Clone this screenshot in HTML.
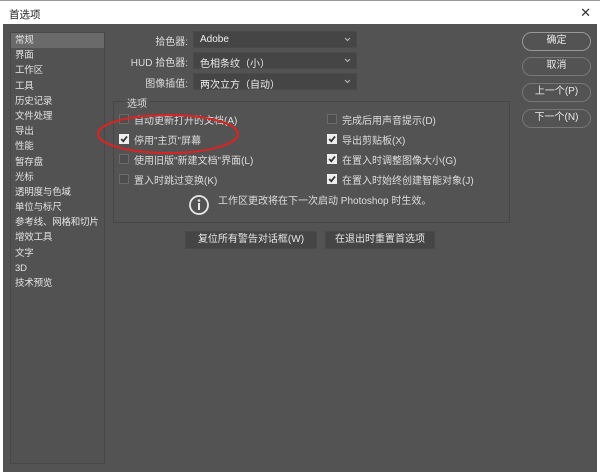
<!DOCTYPE html>
<html><head><meta charset="utf-8">
<style>
*{margin:0;padding:0;box-sizing:border-box}
body{width:600px;height:475px;background:#fff;position:relative;overflow:hidden;font-family:"Liberation Sans","Noto Sans CJK SC",sans-serif;font-size:10px;color:#ddd}
.title{position:absolute;left:0;top:0;width:600px;height:24px;background:#fff;border-top:1px solid #999;color:#222;font-size:10.5px;padding:6px 0 0 9px}
.x{position:absolute;right:9px;top:4px;font-size:13px;color:#333}
.win{position:absolute;left:3px;top:24px;width:594px;height:448px;background:#535353}
.side{position:absolute;left:10px;top:32px;width:95px;height:432px;border:1px solid #484848;background:#525252}
.side div{height:15.2px;line-height:15px;padding-left:4px;font-size:9.5px;color:#e4e4e4;white-space:nowrap;letter-spacing:-0.2px}
.side .sel{background:#6a6a6a}
.a{position:absolute;white-space:nowrap}
.lbl{position:absolute;width:90px;text-align:right;left:98px}
.dd{position:absolute;left:193px;width:164px;height:17px;background:#454545;border:1px solid #4a4a4a;padding:2px 0 0 6px;color:#eee}
.dd svg{position:absolute;right:5px;top:5px}
.grp{position:absolute;left:113px;top:101px;width:397px;height:122px;border:1px solid #464646}
.cb{position:absolute;width:10px;height:10px;border:1px solid #6a6a6a;background:#4d4d4d}
.cb.on{background:#eee;border-color:#eee}
.btn{position:absolute;height:18px;background:#454545;border:1px solid #4a4a4a;text-align:center;line-height:16px;color:#e8e8e8}
.pill{position:absolute;left:522px;width:69px;height:19px;border:1.5px solid #777;border-radius:10px;text-align:center;line-height:16px;color:#e8e8e8}
</style></head><body>
<div class="title">首选项<span class="x">✕</span></div>
<div class="win"></div>
<div class="side">
<div class="sel">常规</div><div>界面</div><div>工作区</div><div>工具</div><div>历史记录</div><div>文件处理</div><div>导出</div><div>性能</div><div>暂存盘</div><div>光标</div><div>透明度与色域</div><div>单位与标尺</div><div>参考线、网格和切片</div><div>增效工具</div><div>文字</div><div>3D</div><div>技术预览</div>
</div>
<div class="lbl" style="top:33px">拾色器:</div>
<div class="lbl" style="top:54px">HUD 拾色器:</div>
<div class="lbl" style="top:75px">图像插值:</div>
<div class="dd" style="top:31px">Adobe<svg width="7" height="5"><path d="M1 1L3.5 3.5L6 1" fill="none" stroke="#bbb"/></svg></div>
<div class="dd" style="top:52px">色相条纹（小）<svg width="7" height="5"><path d="M1 1L3.5 3.5L6 1" fill="none" stroke="#bbb"/></svg></div>
<div class="dd" style="top:73px">两次立方（自动）<svg width="7" height="5"><path d="M1 1L3.5 3.5L6 1" fill="none" stroke="#bbb"/></svg></div>
<div class="grp"></div>
<div class="a" style="left:124px;top:95px;background:#535353;padding:0 3px">选项</div>
<div class="cb" style="left:119px;top:114px"></div><div class="a" style="left:134px;top:112px">自动更新打开的文档(A)</div>
<div class="cb on" style="left:119px;top:134px"><svg width="8" height="8" style="position:absolute;left:0;top:0"><path d="M1.2 4L3.3 6.2L7 1.5" fill="none" stroke="#333" stroke-width="1.8"/></svg></div><div class="a" style="left:134px;top:132px">停用"主页"屏幕</div>
<div class="cb" style="left:119px;top:154px"></div><div class="a" style="left:134px;top:152px">使用旧版"新建文档"界面(L)</div>
<div class="cb" style="left:119px;top:174px"></div><div class="a" style="left:134px;top:172px">置入时跳过变换(K)</div>
<div class="cb" style="left:327px;top:114px"></div><div class="a" style="left:342px;top:112px">完成后用声音提示(D)</div>
<div class="cb on" style="left:327px;top:134px"><svg width="8" height="8" style="position:absolute;left:0;top:0"><path d="M1.2 4L3.3 6.2L7 1.5" fill="none" stroke="#333" stroke-width="1.8"/></svg></div><div class="a" style="left:342px;top:132px">导出剪贴板(X)</div>
<div class="cb on" style="left:327px;top:154px"><svg width="8" height="8" style="position:absolute;left:0;top:0"><path d="M1.2 4L3.3 6.2L7 1.5" fill="none" stroke="#333" stroke-width="1.8"/></svg></div><div class="a" style="left:342px;top:152px">在置入时调整图像大小(G)</div>
<div class="cb on" style="left:327px;top:174px"><svg width="8" height="8" style="position:absolute;left:0;top:0"><path d="M1.2 4L3.3 6.2L7 1.5" fill="none" stroke="#333" stroke-width="1.8"/></svg></div><div class="a" style="left:342px;top:172px">在置入时始终创建智能对象(J)</div>
<svg class="a" style="left:188px;top:194px" width="22" height="22"><circle cx="11" cy="11" r="9" fill="none" stroke="#e8e8e8" stroke-width="1.8"/><circle cx="11" cy="6.5" r="1.3" fill="#e8e8e8"/><rect x="10" y="9" width="2" height="7" fill="#e8e8e8"/></svg>
<div class="a" style="left:218px;top:192px">工作区更改将在下一次启动 Photoshop 时生效。</div>
<div class="btn" style="left:185px;top:231px;width:132px">复位所有警告对话框(W)</div>
<div class="btn" style="left:325px;top:231px;width:110px">在退出时重置首选项</div>
<div class="pill" style="top:32px;border-color:#999">确定</div>
<div class="pill" style="top:57px">取消</div>
<div class="pill" style="top:83px">上一个(P)</div>
<div class="pill" style="top:109px">下一个(N)</div>
<svg class="a" style="left:90px;top:110px" width="160" height="50"><ellipse cx="78" cy="24" rx="70" ry="19" fill="none" stroke="#d22" stroke-width="2"/></svg>
</body></html>
